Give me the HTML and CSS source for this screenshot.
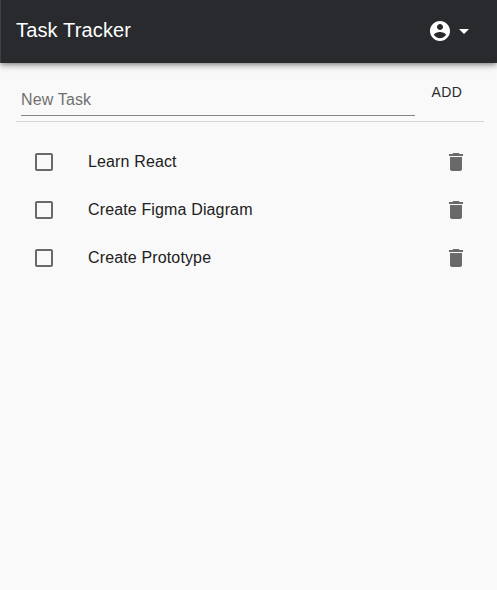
FILE: index.html
```html
<!DOCTYPE html>
<html lang="en">
<head>
<meta charset="utf-8">
<title>Task Tracker</title>
<link rel="stylesheet" href="styles.css">
</head>
<body>
<svg width="0" height="0" class="defs">
<symbol id="box" viewBox="0 0 24 24"><path d="M19 5v14H5V5h14m0-2H5c-1.1 0-2 .9-2 2v14c0 1.1.9 2 2 2h14c1.1 0 2-.9 2-2V5c0-1.1-.9-2-2-2z"/></symbol>
<symbol id="trash" viewBox="0 0 24 24"><path d="M6 19c0 1.1.9 2 2 2h8c1.1 0 2-.9 2-2V7H6v12zM19 4h-3.5l-1-1h-5l-1 1H5v2h14V4z"/></symbol>
</svg>
<header class="appbar">
<h1 class="title">Task Tracker</h1>
<button class="account" aria-label="Account">
<svg class="icon" viewBox="0 0 24 24"><path d="M12 2C6.48 2 2 6.48 2 12s4.48 10 10 10 10-4.48 10-10S17.52 2 12 2zm0 3c1.66 0 3 1.34 3 3s-1.34 3-3 3-3-1.34-3-3 1.34-3 3-3zm0 14.2c-2.5 0-4.71-1.28-6-3.22.03-1.99 4-3.08 6-3.08 1.99 0 5.97 1.09 6 3.08-1.29 1.94-3.5 3.22-6 3.22z"/></svg>
<svg class="icon" viewBox="0 0 24 24"><path d="M7 10l5 5 5-5z"/></svg>
</button>
</header>
<main class="content">
<form class="entry">
<input class="field" type="text" placeholder="New Task">
<button class="add" type="button">ADD</button>
</form>
<ul class="tasks">
<li class="task"><svg class="icon"><use href="#box"/></svg><span class="name">Learn React</span><svg class="icon"><use href="#trash"/></svg></li>
<li class="task"><svg class="icon"><use href="#box"/></svg><span class="name">Create Figma Diagram</span><svg class="icon"><use href="#trash"/></svg></li>
<li class="task"><svg class="icon"><use href="#box"/></svg><span class="name">Create Prototype</span><svg class="icon"><use href="#trash"/></svg></li>
</ul>
</main>
</body>
</html>
```
FILE: styles.css
```css
* { box-sizing: border-box; }
body { margin: 0; min-height: 590px; background: #f9f9f9; color: #212121; font-family: "Liberation Sans", Arial, sans-serif; }
.defs { display: block; }
.appbar { height: 63px; padding: 0 21px 1px 15px; display: flex; align-items: center; justify-content: space-between; background: #282a2e; border-left: 1px solid #3d3f43; color: #fff; box-shadow: 0 2px 4px -1px rgba(0,0,0,.3), 0 4px 5px rgba(0,0,0,.14), 0 1px 10px rgba(0,0,0,.12); }
.title { margin: 0; padding-bottom: 2px; font-size: 20px; font-weight: 400; line-height: 32px; letter-spacing: .15px; }
.account { display: flex; padding: 0; border: 0; background: none; color: inherit; }
.icon { width: 24px; height: 24px; fill: currentColor; flex: none; display: block; }
.content { padding: 0 13px 0 16px; }
.entry { height: 59px; padding: 20px 5px 0; display: flex; border-bottom: 1px solid #d6d6d6; }
.field { width: 394px; height: 33px; padding: 1px 0 0; border: 0; border-bottom: 1px solid #858585; background: none; font: 16px "Liberation Sans", Arial, sans-serif; letter-spacing: .15px; outline: 0; }
.field::placeholder { color: #707070; opacity: 1; }
.add { width: 64px; height: 18px; padding: 0; border: 0; background: none; font: 14px/18px "Liberation Sans", Arial, sans-serif; letter-spacing: .4px; color: #2b2b2b; }
.tasks { list-style: none; margin: 0; padding: 16px 16px 0; }
.task { height: 48px; display: flex; align-items: center; color: #696969; }
.name { flex: 1; margin-left: 32px; font-size: 16px; letter-spacing: .14px; color: #212121; }
```
